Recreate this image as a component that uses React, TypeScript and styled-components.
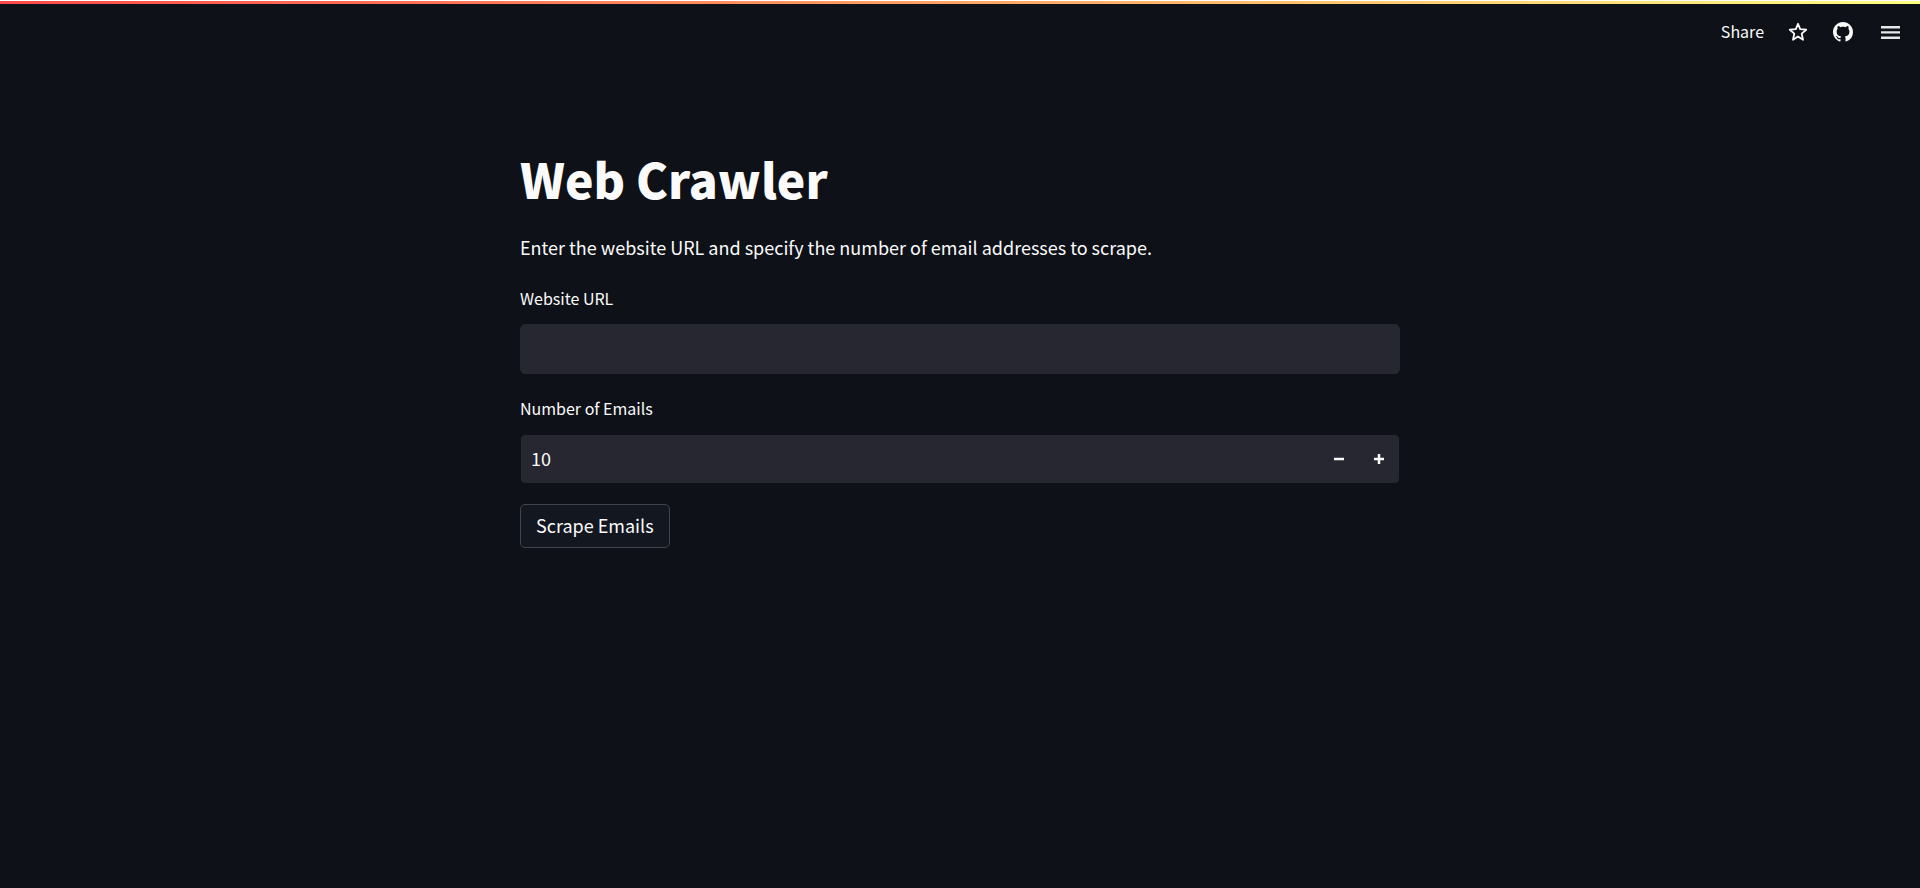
import React, { useState } from "react";
import styled, { createGlobalStyle } from "styled-components";

const GlobalStyle = createGlobalStyle`
  *, *::before, *::after { box-sizing: border-box; }
  body {
    margin: 0;
    background: #0e1117;
    color: #fafafa;
    font-family: "Source Sans Pro", "Noto Sans CJK SC", "Noto Sans", sans-serif;
    font-size: 18px;
    line-height: 32px;
  }
  button, input { font: inherit; color: inherit; }
`;

const Page = styled.div`
  min-height: 100vh;
  border-top: 1px solid #ffffff;
`;

const Decoration = styled.div`
  height: 3px;
  background: linear-gradient(90deg, #ff4b4b, #fffd80);
`;

const Toolbar = styled.header`
  display: flex;
  align-items: center;
  justify-content: flex-end;
  height: 56px;
  padding: 0 10px;
`;

const ToolbarButton = styled.button`
  display: flex;
  align-items: center;
  height: 40px;
  padding: 0 12px;
  border: 0;
  background: transparent;
  font-size: 16px;
  line-height: 24px;
  cursor: pointer;
`;

const ShareButton = styled(ToolbarButton)`
  padding-bottom: 2px;
`;

const IconLink = styled.a`
  display: flex;
  align-items: center;
  height: 40px;
  padding: 0 12px 0 13px;
  color: inherit;
`;

const MenuButton = styled(ToolbarButton)`
  margin-left: 4px;
  padding: 0 10px 0 11px;
`;

const Main = styled.main`
  width: 100%;
  max-width: 920px;
  margin: 0 auto;
  padding: 84px 20px 40px;
`;

const Title = styled.h1`
  margin: 0;
  padding-bottom: 19px;
  font-size: 48px;
  font-weight: 900;
  line-height: 68px;
`;

const Form = styled.form`
  display: flex;
  flex-direction: column;
  align-items: flex-start;
`;

const Intro = styled.p`
  margin: 0 0 21px;
`;

const Field = styled.div`
  width: 100%;
  margin-bottom: 20px;
`;

const Label = styled.label`
  display: block;
  padding-bottom: 12px;
  font-size: 16px;
  line-height: 28px;
`;

const TextInput = styled.input`
  display: block;
  width: 100%;
  height: 50px;
  padding: 0 10px 2px;
  border: 1px solid #262730;
  border-radius: 5px;
  outline: 0;
  background: #262730;
`;

const NumberBox = styled.div`
  display: flex;
  height: 50px;
  overflow: hidden;
  border: 1px solid transparent;
  border-radius: 5px;
  background: #262730;
  background-clip: padding-box;
`;

const NumberInput = styled.input`
  flex: 1;
  min-width: 0;
  padding: 0 10px 2px;
  border: 0;
  outline: 0;
  background: transparent;
`;

const StepButton = styled.button`
  display: flex;
  align-items: center;
  justify-content: center;
  width: 40px;
  padding: 0;
  border: 0;
  background: transparent;
  cursor: pointer;
`;

const SubmitButton = styled.button`
  height: 44px;
  padding: 0 15px 2px;
  border: 1px solid #41444c;
  border-radius: 5px;
  background: #131720;
  line-height: 32px;
  cursor: pointer;
`;

const StarIcon = () => (
  <svg width="20" height="20" viewBox="0 0 20 20" fill="none" stroke="currentColor" strokeWidth="1.8" strokeLinejoin="round" aria-hidden="true">
    <path d="M10 1.8 12.2 7.2 18.2 7.7 13.7 11.6 15 17.8 10 14.6 5 17.8 6.3 11.6 1.8 7.7 7.8 7.2Z" />
  </svg>
);

const GithubIcon = () => (
  <svg width="20" height="20" viewBox="0 0 16 16" fill="currentColor" aria-hidden="true">
    <path d="M8 0C3.58 0 0 3.58 0 8c0 3.54 2.29 6.53 5.47 7.59.4.07.55-.17.55-.38 0-.19-.01-.82-.01-1.49-2.01.37-2.53-.49-2.69-.94-.09-.23-.48-.94-.82-1.13-.28-.15-.68-.52-.01-.53.63-.01 1.08.58 1.23.82.72 1.21 1.87.87 2.33.66.07-.52.28-.87.51-1.07-1.78-.2-3.64-.89-3.64-3.95 0-.87.31-1.59.82-2.15-.08-.2-.36-1.02.08-2.12 0 0 .67-.21 2.2.82.64-.18 1.32-.27 2-.27s1.36.09 2 .27c1.53-1.04 2.2-.82 2.2-.82.44 1.1.16 1.92.08 2.12.51.56.82 1.27.82 2.15 0 3.07-1.87 3.75-3.65 3.95.29.25.54.73.54 1.48 0 1.07-.01 1.93-.01 2.2 0 .21.15.46.55.38A8.01 8.01 0 0 0 16 8c0-4.42-3.58-8-8-8Z" />
  </svg>
);

const MenuIcon = () => (
  <svg width="20" height="20" viewBox="0 0 20 20" fill="#e6e7e8" aria-hidden="true">
    <path d="M1 4h19v2.4H1zM1 9.2h19v2.4H1zM1 14.5h19v2.4H1z" />
  </svg>
);

const StepIcon = ({ plus = false }: { plus?: boolean }) => (
  <svg width="10" height="10" viewBox="0 0 8 8" fill="currentColor" aria-hidden="true">
    <path d={plus ? "M3 0v3H0v2h3v3h2V5h3V3H5V0H3z" : "M0 3v2h8V3H0z"} />
  </svg>
);

export default function App() {
  const [url, setUrl] = useState("");
  const [count, setCount] = useState("10");
  const step = (by: number) => setCount(String(Math.max(1, (Number(count) || 0) + by)));

  return (
    <Page>
      <GlobalStyle />
      <Decoration />
      <Toolbar>
        <ShareButton type="button">Share</ShareButton>
        <ToolbarButton type="button" aria-label="Favorite"><StarIcon /></ToolbarButton>
        <IconLink href="#source" aria-label="View source on GitHub"><GithubIcon /></IconLink>
        <MenuButton type="button" aria-label="Main menu"><MenuIcon /></MenuButton>
      </Toolbar>
      <Main>
        <Title>Web Crawler</Title>
        <Intro>Enter the website URL and specify the number of email addresses to scrape.</Intro>
        <Form onSubmit={(e) => e.preventDefault()}>
          <Field>
            <Label htmlFor="url">Website URL</Label>
            <TextInput id="url" type="text" value={url} onChange={(e) => setUrl(e.target.value)} />
          </Field>
          <Field>
            <Label htmlFor="count">Number of Emails</Label>
            <NumberBox>
              <NumberInput id="count" inputMode="numeric" value={count} onChange={(e) => setCount(e.target.value)} />
              <StepButton type="button" aria-label="Decrease" onClick={() => step(-1)}><StepIcon /></StepButton>
              <StepButton type="button" aria-label="Increase" onClick={() => step(1)}><StepIcon plus /></StepButton>
            </NumberBox>
          </Field>
          <SubmitButton type="submit">Scrape Emails</SubmitButton>
        </Form>
      </Main>
    </Page>
  );
}
